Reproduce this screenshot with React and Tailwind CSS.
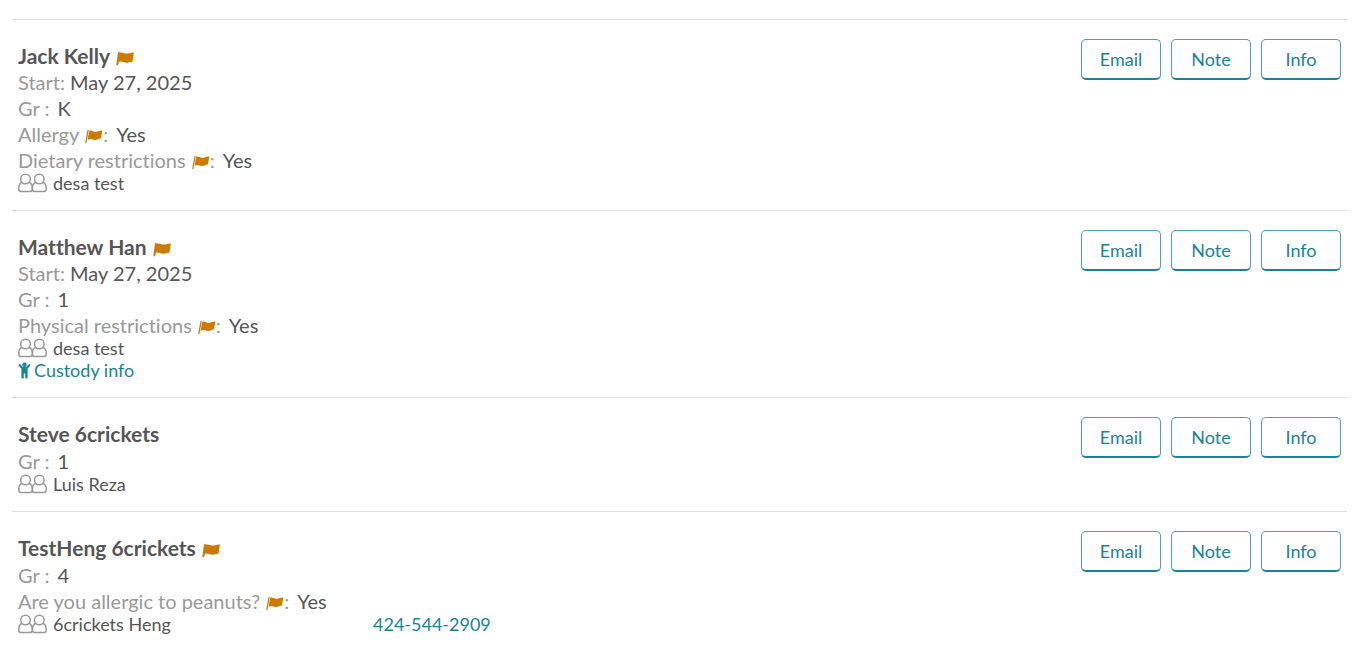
const campers = [
  {
    name: "Jack Kelly",
    flagged: true,
    start: "May 27, 2025",
    grade: "K",
    answers: [
      { label: "Allergy", value: "Yes" },
      { label: "Dietary restrictions", value: "Yes" },
    ],
    guardian: "desa test",
  },
  {
    name: "Matthew Han",
    flagged: true,
    start: "May 27, 2025",
    grade: "1",
    answers: [{ label: "Physical restrictions", value: "Yes" }],
    guardian: "desa test",
    custody: true,
  },
  {
    name: "Steve 6crickets",
    grade: "1",
    answers: [],
    guardian: "Luis Reza",
  },
  {
    name: "TestHeng 6crickets",
    flagged: true,
    grade: "4",
    answers: [{ label: "Are you allergic to peanuts?", value: "Yes" }],
    guardian: "6crickets Heng",
    phone: "424-544-2909",
  },
];

function NameFlag() {
  return (
    <svg viewBox="0 0 18 15" className="mt-1 ml-1.5 h-[15px] w-[18px]" aria-hidden="true">
      <path
        fill="#cc7a00"
        d="M2.300 1c.7-.4 1.400 0 1.400.7 2.800-.8 4.500.9 7.300.9 2.200.1 4-1.300 6.900-1l-1.500 9.100c-2.500-.4-3.800 1-6.100 1-2.800 0-4.500-1.900-7.300-1l-.8 3c-.2.500-.6.700-1.200.5-.5-.1-.7-.5-.6-1L1.900 2z"
      />
    </svg>
  );
}

function AnswerFlag() {
  return (
    <svg viewBox="0 0 18 15" className="mt-1 ml-1.5 h-[15px] w-[18px]" aria-hidden="true">
      <path stroke="#cc7a00" strokeWidth="1.300" strokeLinecap="round" d="M3 1.500.9 13.500" />
      <path
        fill="#cc7a00"
        d="M4.200 1.800c2.400-1.100 4.200.9 6.500 1.100 2 .2 3.700-1.700 6.700-1.200l-1.600 7.900c-2.400-.2-3.600 1.700-5.800 1.500-2.800-.2-4.200-2.100-7.400-.2z"
      />
    </svg>
  );
}

function Guardians() {
  return (
    <svg
      viewBox="0 0 29 20"
      className="h-5 w-[29px]"
      fill="none"
      stroke="#999"
      strokeWidth="1.500"
      aria-hidden="true"
    >
      <circle cx="7.500" cy="6" r="4.800" />
      <path d="M4 9.300C1.800 10.300.8 12 .8 15v1.200c0 1.500.8 2.200 2.200 2.200h9.200c1.400 0 2.200-.7 2.200-2.200V15c0-3-1.100-4.700-3.400-5.700" />
      <circle cx="21.300" cy="6" r="4.800" />
      <path d="M17.900 9.300c-2.300 1-3.500 2.700-3.500 5.700v1.200c0 1.500.8 2.200 2.200 2.200h9.400c1.400 0 2.200-.7 2.200-2.200V15c0-3-1-4.700-3.400-5.700" />
    </svg>
  );
}

function Child() {
  return (
    <svg viewBox="0 0 12 17" className="h-[17px] w-3" fill="#1a8299" aria-hidden="true">
      <circle cx="6.500" cy="2.800" r="2.200" />
      <path d="M.9 2.500c.4-.5 1-.5 1.500 0l2.600 2.600h3l2.600-2.600c.5-.5 1.100-.5 1.500 0 .4.400.4 1 0 1.400L9.600 6.600V15.500c0 .7-.5 1.100-1.200 1.100s-1.200-.4-1.200-1.100v-3.900H5.800v3.900c0 .7-.5 1.100-1.200 1.100s-1.200-.4-1.200-1.100V6.600L.9 3.900c-.4-.4-.4-1 0-1.400z" />
    </svg>
  );
}

function ActionButton({ children }) {
  return (
    <button
      type="button"
      className="h-[41px] w-20 rounded-[5px] border border-b-2 border-[#4ba0b2] border-b-[#1a8299] bg-white text-lg text-[#1a8299] hover:bg-[#f0f8fa]"
    >
      {children}
    </button>
  );
}

function CamperRow({ camper }) {
  return (
    <li className="flex items-start justify-between border-t border-[#ddd] px-1.5 pt-[19px] pb-[17px]">
      <div className="pt-[3px]">
        <h2 className="flex h-7 items-center text-[21px] leading-7 font-bold">
          {camper.name}
          {camper.flagged && <NameFlag />}
        </h2>
        {camper.start && (
          <p className="text-xl leading-[25px]">
            <span className="text-[#999]">Start:</span> {camper.start}
          </p>
        )}
        <p className="flex gap-2 text-xl leading-[26px]">
          <span className="text-[#999]">Gr :</span>
          {camper.grade}
        </p>
        {camper.answers.map((answer) => (
          <p key={answer.label} className="flex items-center text-xl leading-[26px]">
            <span className="text-[#999]">{answer.label}</span>
            <AnswerFlag />
            <span className="mr-2 text-[#999]">:</span>
            {answer.value}
          </p>
        ))}
        <div className="flex h-5 items-center text-lg leading-5">
          <Guardians />
          <span className="ml-1.5 w-80">{camper.guardian}</span>
          {camper.phone && (
            <a href={`tel:${camper.phone}`} className="text-[#1a8299]">
              {camper.phone}
            </a>
          )}
        </div>
        {camper.custody && (
          <a
            href="#custody"
            className="flex h-[22px] items-center gap-1 pt-0.5 text-lg leading-5 text-[#1a8299]"
          >
            <Child />
            Custody info
          </a>
        )}
      </div>
      <div className="flex gap-2.5">
        <ActionButton>Email</ActionButton>
        <ActionButton>Note</ActionButton>
        <ActionButton>Info</ActionButton>
      </div>
    </li>
  );
}

function App() {
  return (
    <main className="bg-white pt-[19px] pr-[9px] pl-3 font-['Lato',sans-serif] text-[#555] [font-variant-ligatures:none]">
      <ul>
        {campers.map((camper) => (
          <CamperRow key={camper.name} camper={camper} />
        ))}
      </ul>
    </main>
  );
}

export default App;
